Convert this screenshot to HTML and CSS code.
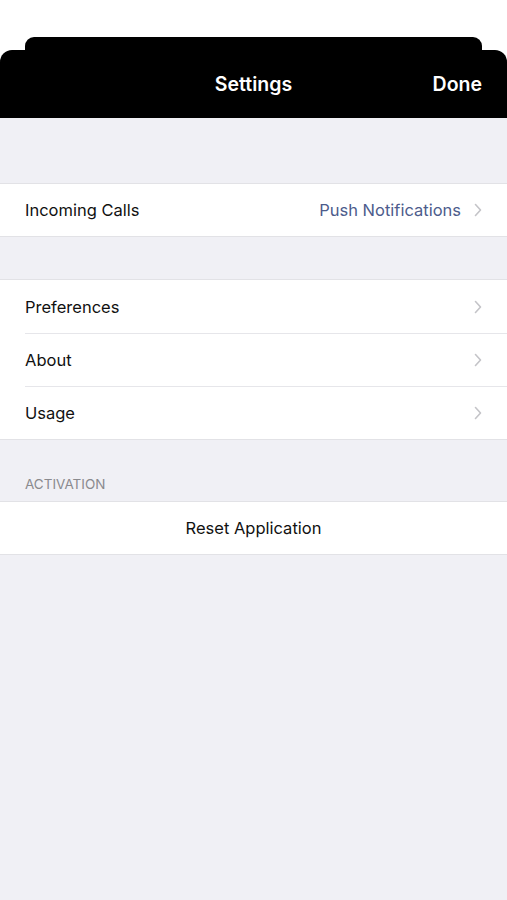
FILE: index.html
```html
<!DOCTYPE html>
<html>
<head>
<meta name="viewport" content="width=device-width, initial-scale=1">
<link rel="stylesheet" href="styles.css">
</head>
<body>
<!-- Sheet header -->
<div class="sheet-top">
  <div class="sheet-back"></div>
  <div class="navbar">
    <span class="nav-title">Settings</span>
    <a href="javascript:void(0)" class="nav-done">Done</a>
  </div>
</div>

<!-- Settings list -->
<div class="content">
  <div class="group first">
    <div class="row">
      <span class="label">Incoming Calls</span>
      <span class="value">Push Notifications</span>
      <svg class="chev" width="8" height="14" viewBox="0 0 8 14"><path d="M1.5 1.5L6.5 7L1.5 12.5" fill="none" stroke="#c4c4c8" stroke-width="1.6" stroke-linecap="round" stroke-linejoin="round"/></svg>
    </div>
  </div>

  <div class="group">
    <div class="row">
      <span class="label">Preferences</span>
      <svg class="chev" width="8" height="14" viewBox="0 0 8 14"><path d="M1.5 1.5L6.5 7L1.5 12.5" fill="none" stroke="#c4c4c8" stroke-width="1.6" stroke-linecap="round" stroke-linejoin="round"/></svg>
    </div>
    <div class="row">
      <span class="label">About</span>
      <svg class="chev" width="8" height="14" viewBox="0 0 8 14"><path d="M1.5 1.5L6.5 7L1.5 12.5" fill="none" stroke="#c4c4c8" stroke-width="1.6" stroke-linecap="round" stroke-linejoin="round"/></svg>
    </div>
    <div class="row">
      <span class="label">Usage</span>
      <svg class="chev" width="8" height="14" viewBox="0 0 8 14"><path d="M1.5 1.5L6.5 7L1.5 12.5" fill="none" stroke="#c4c4c8" stroke-width="1.6" stroke-linecap="round" stroke-linejoin="round"/></svg>
    </div>
  </div>

  <div class="section-head">ACTIVATION</div>
  <div class="group tight">
    <div class="row center">
      <span class="label">Reset Application</span>
    </div>
  </div>
</div>
</body>
</html>
```

FILE: styles.css
```css
html {
  background-color: #f0f0f5;
}
body {
  margin: 0;
  font-family: Inter, "Liberation Sans", sans-serif;
  color: #111;
  background-color: #f0f0f5;
  min-height: 900px;
}
.sheet-top {
  background-color: #fff;
  padding-top: 37px;
}
.sheet-back {
  height: 13px;
  margin: 0 25px;
  background-color: #000;
  border-radius: 9px 9px 0 0;
}
.navbar {
  height: 68px;
  background-color: #000;
  border-radius: 12px 12px 0 0;
  display: flex;
  align-items: center;
  justify-content: center;
  position: relative;
}
.nav-title {
  color: #fff;
  font-size: 19.5px;
  font-weight: 600;
}
.nav-done {
  position: absolute;
  right: 25px;
  color: #fff;
  font-size: 19.5px;
  font-weight: 600;
  text-decoration: none;
}
.content {
  padding-top: 65px;
}
.group {
  background-color: #fff;
  border-top: 1px solid #e2e2e6;
  border-bottom: 1px solid #e2e2e6;
  margin-top: 42px;
}
.group.first {
  margin-top: 0;
}
.group.first .row,
.group.tight .row {
  height: 52px;
}
.group.tight {
  margin-top: 0;
}
.row {
  height: 53px;
  display: flex;
  align-items: center;
  padding: 0 25px;
  position: relative;
  font-size: 16.5px;
}
.row + .row::before {
  content: "";
  position: absolute;
  top: 0;
  left: 25px;
  right: 0;
  border-top: 1px solid #e6e6ea;
}
.label {
  flex: 1;
}
.row.center .label {
  text-align: center;
}
.value {
  color: #4d5c8c;
  margin-right: 13px;
}
.chev {
  display: block;
}
.section-head {
  padding: 36px 25px 9px;
  font-size: 13.5px;
  color: #8a8a8e;
}
```
